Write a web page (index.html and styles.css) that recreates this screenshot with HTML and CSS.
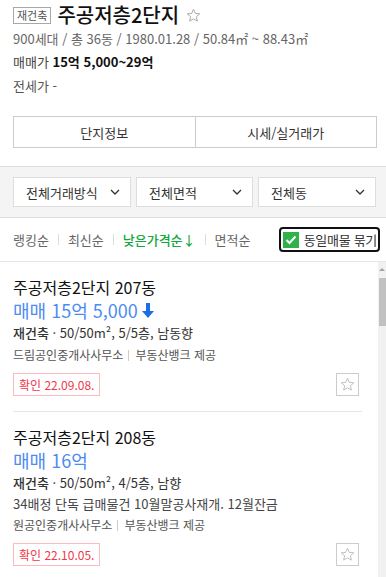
FILE: index.html
```html
<!DOCTYPE html>
<html lang="ko">
<head>
    <meta charset="UTF-8">
    <title>주공저층2단지</title>
    <link rel="stylesheet" href="styles.css">
</head>
<body>
    <div class="complex">
        <div class="title-row">
            <span class="tag">재건축</span>
            <h1>주공저층2단지</h1>
            <svg class="fav" width="15" height="15" viewBox="0 0 24 24"><polygon points="12,2 14.9,8.6 22,9.3 16.6,14 18.2,21 12,17.3 5.8,21 7.4,14 2,9.3 9.1,8.6" fill="none" stroke="#aaa" stroke-width="1.6" stroke-linejoin="round"/></svg>
        </div>
        <div class="meta">900세대 / 총 36동 / 1980.01.28 / 50.84㎡ ~ 88.43㎡</div>
        <div class="price-line">매매가 <b>15억 5,000~29억</b></div>
        <div class="price-line jeonse">전세가 -</div>
        <div class="tabs">
            <button type="button">단지정보</button>
            <button type="button">시세/실거래가</button>
        </div>
    </div>

    <div class="filters">
        <div class="select">전체거래방식 <svg width="10" height="6" viewBox="0 0 10 6"><polyline points="1,1 5,5 9,1" fill="none" stroke="#333" stroke-width="1.3"/></svg></div>
        <div class="select">전체면적 <svg width="10" height="6" viewBox="0 0 10 6"><polyline points="1,1 5,5 9,1" fill="none" stroke="#333" stroke-width="1.3"/></svg></div>
        <div class="select">전체동 <svg width="10" height="6" viewBox="0 0 10 6"><polyline points="1,1 5,5 9,1" fill="none" stroke="#333" stroke-width="1.3"/></svg></div>
    </div>

    <div class="sorts">
        <span class="sort">랭킹순</span>
        <span class="sep"></span>
        <span class="sort">최신순</span>
        <span class="sep"></span>
        <span class="sort on">낮은가격순↓</span>
        <span class="sep"></span>
        <span class="sort">면적순</span>
        <label class="group">
            <span class="check"><svg width="12" height="10" viewBox="0 0 12 10"><polyline points="1.5,5 4.5,8 10.5,1.5" fill="none" stroke="#fff" stroke-width="2"/></svg></span>
            동일매물 묶기
        </label>
    </div>

    <div class="list-wrap">
        <div class="list">
            <div class="item">
                <div class="item-title">주공저층2단지 207동</div>
                <div class="item-price">매매 15억 5,000 <svg width="12" height="15" viewBox="0 0 12 15"><path d="M4 0h4v8h4l-6 7-6-7h4z" fill="#1a6fe8"/></svg></div>
                <div class="item-desc"><b>재건축</b> · 50/50m², 5/5층, 남동향</div>
                <div class="item-agent">드림공인중개사사무소 <span class="bar"></span> 부동산뱅크 제공</div>
                <div class="item-foot">
                    <span class="confirm">확인 22.09.08.</span>
                    <span class="star-box"><svg width="15" height="15" viewBox="0 0 24 24"><polygon points="12,2 14.9,8.6 22,9.3 16.6,14 18.2,21 12,17.3 5.8,21 7.4,14 2,9.3 9.1,8.6" fill="none" stroke="#bbb" stroke-width="1.5" stroke-linejoin="round"/></svg></span>
                </div>
            </div>
            <div class="item">
                <div class="item-title">주공저층2단지 208동</div>
                <div class="item-price">매매 16억</div>
                <div class="item-desc"><b>재건축</b> · 50/50m², 4/5층, 남향</div>
                <div class="item-note">34배정 단독 급매물건 10월말공사재개. 12월잔금</div>
                <div class="item-agent">원공인중개사사무소 <span class="bar"></span> 부동산뱅크 제공</div>
                <div class="item-foot">
                    <span class="confirm">확인 22.10.05.</span>
                    <span class="star-box"><svg width="15" height="15" viewBox="0 0 24 24"><polygon points="12,2 14.9,8.6 22,9.3 16.6,14 18.2,21 12,17.3 5.8,21 7.4,14 2,9.3 9.1,8.6" fill="none" stroke="#bbb" stroke-width="1.5" stroke-linejoin="round"/></svg></span>
                </div>
            </div>
        </div>
        <div class="scrollbar">
            <span class="arrow"></span>
            <span class="thumb"></span>
        </div>
    </div>
</body>
</html>
```

FILE: styles.css
```css
body {
    margin: 0;
    width: 386px;
    height: 577px;
    overflow: hidden;
    font-family: "Noto Sans CJK KR", "Noto Sans", sans-serif;
    color: #222;
    background-color: #fff;
}
.complex {
    padding: 3px 9px 18px 13px;
    border-bottom: 1px solid #ddd;
}
.title-row {
    display: flex;
    align-items: center;
    height: 24px;
}
.tag {
    font-size: 11px;
    line-height: 15px;
    color: #555;
    border: 1px solid #a8a8a8;
    padding: 0 3px;
}
h1 {
    margin: 0 0 0 6px;
    font-size: 20px;
    font-weight: 500;
    line-height: 24px;
    color: #111;
}
.fav {
    margin-left: 7px;
}
.meta {
    margin-top: 1px;
    font-size: 13px;
    line-height: 22px;
    color: #666;
}
.price-line {
    font-size: 13px;
    line-height: 24px;
    color: #444;
}
.price-line b {
    color: #111;
}
.jeonse {
    color: #555;
}
.tabs {
    display: flex;
    margin-top: 18px;
    border: 1px solid #ccc;
    height: 30px;
}
.tabs button {
    flex: 1;
    border: none;
    background: #fff;
    font-family: inherit;
    font-size: 13px;
    color: #333;
    padding: 0;
}
.tabs button + button {
    border-left: 1px solid #ccc;
}
.filters {
    display: grid;
    grid-template-columns: 118px 117px 118px;
    gap: 5px;
    padding: 10px 10px 10px 13px;
    background-color: #f4f4f4;
    border-bottom: 1px solid #ddd;
}
.select {
    display: flex;
    align-items: center;
    justify-content: space-between;
    height: 28px;
    padding: 0 10px 0 12px;
    background: #fff;
    border: 1px solid #ddd;
    font-size: 13px;
    color: #333;
}
.sorts {
    display: flex;
    align-items: center;
    height: 43px;
    padding-left: 13px;
    border-bottom: 1px solid #e5e5e5;
    font-size: 13px;
}
.sort {
    color: #666;
}
.sort.on {
    color: #11a83c;
    font-weight: 500;
}
.sep {
    width: 1px;
    height: 11px;
    margin: 0 9px;
    background-color: #ddd;
}
.group {
    display: flex;
    align-items: center;
    margin-left: auto;
    margin-right: 6px;
    height: 21px;
    padding: 0 1px 0 2px;
    border: 2px solid #111;
    border-radius: 4px;
    color: #333;
    letter-spacing: -0.3px;
}
.check {
    display: flex;
    align-items: center;
    justify-content: center;
    width: 16px;
    height: 16px;
    margin-right: 5px;
    background-color: #2fb24c;
}
.list-wrap {
    display: flex;
    height: 315px;
}
.list {
    width: 378px;
}
.item {
    margin: 0 16px 0 13px;
    padding: 14px 0 15px;
    border-bottom: 1px solid #e5e5e5;
}
.item-title {
    font-size: 16px;
    line-height: 22px;
    color: #111;
}
.item-price {
    display: flex;
    align-items: center;
    font-size: 18px;
    line-height: 24px;
    color: #4c8cf0;
}
.item-price svg {
    margin-left: 4px;
}
.item-desc {
    font-size: 13px;
    line-height: 22px;
    color: #333;
}
.item-desc b {
    font-weight: 500;
}
.item-note {
    font-size: 13px;
    line-height: 20px;
    color: #444;
}
.item-agent {
    display: flex;
    align-items: center;
    font-size: 12px;
    line-height: 22px;
    color: #555;
}
.bar {
    width: 1px;
    height: 11px;
    margin: 0 6px 0 5px;
    background-color: #ccc;
}
.item-foot {
    display: flex;
    justify-content: space-between;
    align-items: center;
    margin-top: 7px;
}
.confirm {
    font-size: 12px;
    line-height: 21px;
    padding: 0 5px;
    color: #f0384c;
    border: 1px solid #ffb9c1;
}
.star-box {
    display: flex;
    align-items: center;
    justify-content: center;
    width: 21px;
    height: 21px;
    margin-right: 3px;
    border: 1px solid #ccc;
}
.scrollbar {
    display: flex;
    flex-direction: column;
    align-items: center;
    width: 8px;
    background-color: #f1f1f1;
}
.arrow {
    margin-top: 6px;
    border-left: 3px solid transparent;
    border-right: 3px solid transparent;
    border-bottom: 3px solid #a3a3a3;
}
.thumb {
    margin-top: 7px;
    width: 7px;
    margin-left: 1px;
    height: 48px;
    background-color: #c1c1c1;
}
```
